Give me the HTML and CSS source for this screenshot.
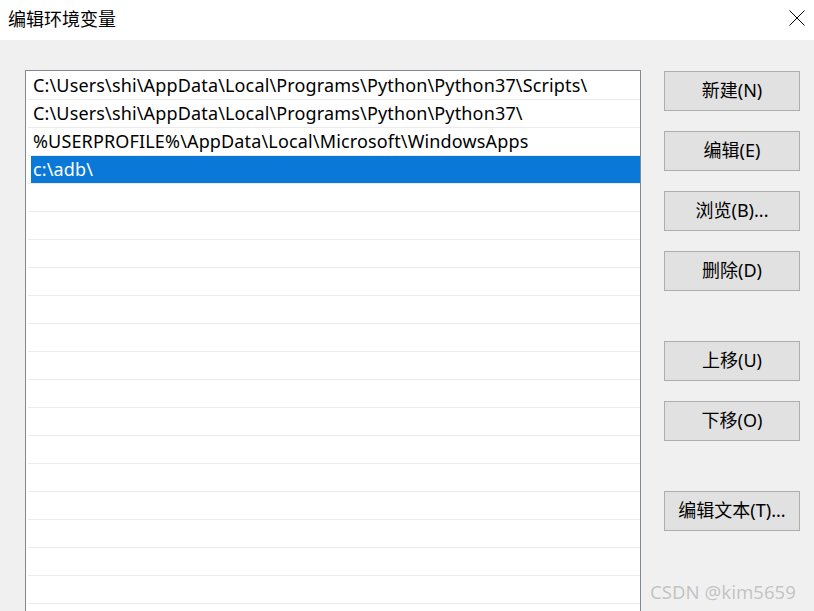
FILE: index.html
```html
<!DOCTYPE html>
<html lang="zh-CN">
<head>
<meta charset="utf-8">
<title>编辑环境变量</title>
<link rel="stylesheet" href="styles.css">
</head>
<body>
<div class="dialog">
  <div class="titlebar">
    <span class="title">编辑环境变量</span>
    <span class="close">
      <svg width="16" height="16" viewBox="0 0 16 16"><path d="M0.5 0.5 L15.5 15.5 M15.5 0.5 L0.5 15.5" stroke="#000" stroke-width="1" fill="none"/></svg>
    </span>
  </div>
  <div class="content">
    <div class="list">
      <div class="row"><span class="item">C:\Users\shi\AppData\Local\Programs\Python\Python37\Scripts\</span></div>
      <div class="row"><span class="item">C:\Users\shi\AppData\Local\Programs\Python\Python37\</span></div>
      <div class="row"><span class="item">%USERPROFILE%\AppData\Local\Microsoft\WindowsApps</span></div>
      <div class="row"><span class="item selected">c:\adb\</span></div>
      <div class="row"></div>
      <div class="row"></div>
      <div class="row"></div>
      <div class="row"></div>
      <div class="row"></div>
      <div class="row"></div>
      <div class="row"></div>
      <div class="row"></div>
      <div class="row"></div>
      <div class="row"></div>
      <div class="row"></div>
      <div class="row"></div>
      <div class="row"></div>
      <div class="row"></div>
      <div class="row"></div>
      <div class="row"></div>
    </div>
    <div class="buttons">
      <button class="btn">新建(N)</button>
      <button class="btn">编辑(E)</button>
      <button class="btn">浏览(B)...</button>
      <button class="btn">删除(D)</button>
      <button class="btn spaced">上移(U)</button>
      <button class="btn">下移(O)</button>
      <button class="btn spaced">编辑文本(T)...</button>
    </div>
  </div>
  <div class="watermark">CSDN @kim5659</div>
</div>
</body>
</html>
```
FILE: styles.css
```css
* { box-sizing: border-box; }
html, body {
  margin: 0;
  padding: 0;
  width: 814px;
  height: 611px;
  overflow: hidden;
  background: #f0f0f0;
  font-family: "Noto Sans", "Noto Sans CJK SC", sans-serif;
  color: #000;
}
.dialog {
  position: relative;
  width: 814px;
  height: 611px;
  overflow: hidden;
}
.titlebar {
  height: 40px;
  background: #fff;
  display: flex;
  align-items: center;
  justify-content: space-between;
  padding: 0 9px 0 8px;
}
.title {
  font-family: "Noto Sans CJK SC", sans-serif;
  font-size: 18px;
  line-height: 20px;
  margin-top: -4px;
}
.close {
  display: flex;
  margin-top: -4px;
}
.content {
  display: flex;
  padding: 30px 0 0 25px;
  gap: 23px;
}
.list {
  width: 616px;
  height: 600px;
  background: #fff;
  border: 1px solid #828790;
  border-bottom: none;
  padding: 1px 0 0 1px;
}
.row {
  height: 28px;
  border-bottom: 1px solid #ebebeb;
  margin-left: 1px;
  display: flex;
}
.item {
  flex: 1;
  height: 27px;
  line-height: 27px;
  margin-left: 3px;
  padding-left: 2px;
  font-size: 18px;
  letter-spacing: 0.15px;
  white-space: nowrap;
}
.item.selected {
  background: #0a78d7;
  color: #fff;
}
.buttons {
  display: flex;
  flex-direction: column;
  gap: 20px;
  padding-top: 1px;
}
.btn {
  width: 136px;
  height: 40px;
  background: #e1e1e1;
  border: 1px solid #adadad;
  font-family: "Noto Sans", "Noto Sans CJK SC", sans-serif;
  font-size: 18px;
  line-height: 20px;
  color: #000;
  padding: 0 0 2px 0;
  margin: 0;
}
.btn.spaced {
  margin-top: 30px;
}
.watermark {
  position: absolute;
  left: 650px;
  top: 579px;
  font-family: "Noto Sans", sans-serif;
  font-size: 18.6px;
  color: #c2c2c2;
  text-shadow: 0 0 1px #fff;
  white-space: nowrap;
}
```
